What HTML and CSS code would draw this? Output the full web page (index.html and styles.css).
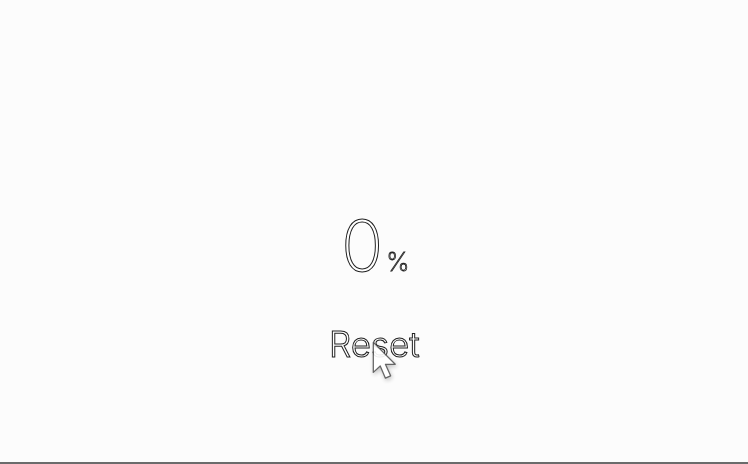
FILE: index.html
```html
<!DOCTYPE html>
<html>
<head>
<meta charset="utf-8">
<link rel="stylesheet" href="styles.css">
</head>
<body>
<main class="stage">
  <div class="value"><span class="num">0</span><span class="pct">%</span></div>
  <div class="reset-wrap">
    <button class="reset">Reset</button>
    <svg class="cursor" width="30" height="44" viewBox="0 0 26 38">
      <path d="M2 2 L2 28 L8 22.5 L12.5 33 L17 31 L12.5 21 L21 21 Z" fill="#fff" stroke="#555" stroke-width="1.1" stroke-linejoin="round"/>
    </svg>
  </div>
</main>
</body>
</html>
```
FILE: styles.css
```css
html, body {
  margin: 0;
  padding: 0;
  height: 100%;
}
body {
  background: #fcfcfc;
  font-family: Inter, "Noto Sans", sans-serif;
  box-sizing: border-box;
  border-bottom: 2px solid #6b6b6b;
}
.stage {
  display: flex;
  flex-direction: column;
  align-items: center;
  padding-top: 206px;
}
.value {
  display: flex;
  align-items: baseline;
  padding-left: 2px;
  will-change: transform;
}
.num {
  font-size: 70px;
  font-weight: 200;
  line-height: 80px;
  color: #fff;
  -webkit-text-stroke: 1px #222;
}
.pct {
  font-size: 26px;
  font-weight: 200;
  color: #fff;
  -webkit-text-stroke: 0.8px #222;
  margin-left: 3px;
}
.reset-wrap {
  position: relative;
  margin-top: 38px;
  will-change: transform;
}
.reset {
  background: none;
  border: 0;
  padding: 0;
  font-family: Inter, "Noto Sans", sans-serif;
  font-size: 35px;
  font-weight: 300;
  line-height: 40px;
  color: #fff;
  -webkit-text-stroke: 1px #222;
}
.cursor {
  position: absolute;
  left: 42px;
  top: 16px;
  opacity: 0.9;
  filter: drop-shadow(1px 2px 2px rgba(0,0,0,0.25));
}
```
